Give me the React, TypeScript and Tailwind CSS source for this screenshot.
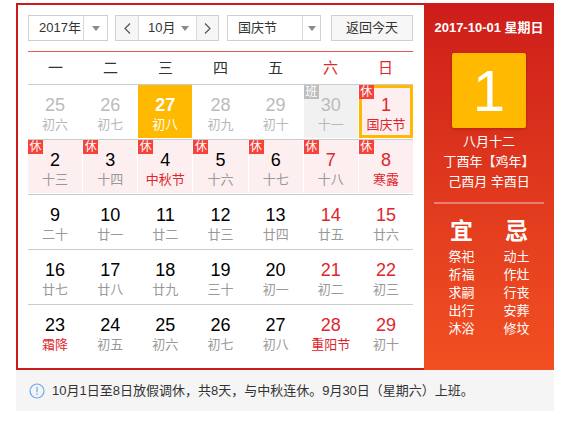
type Day = {
  n: number;
  lunar: string;
  other?: boolean;
  red?: boolean;
  lunarRed?: boolean;
  badge?: "休" | "班";
  pink?: boolean;
  gray?: boolean;
  selected?: boolean;
  today?: boolean;
};

const weeks: Day[][] = [
  [
    { n: 25, lunar: "初六", other: true },
    { n: 26, lunar: "初七", other: true },
    { n: 27, lunar: "初八", other: true, selected: true },
    { n: 28, lunar: "初九", other: true },
    { n: 29, lunar: "初十", other: true },
    { n: 30, lunar: "十一", other: true, badge: "班", gray: true },
    { n: 1, lunar: "国庆节", red: true, lunarRed: true, badge: "休", pink: true, today: true },
  ],
  [
    { n: 2, lunar: "十三", badge: "休", pink: true },
    { n: 3, lunar: "十四", badge: "休", pink: true },
    { n: 4, lunar: "中秋节", lunarRed: true, badge: "休", pink: true },
    { n: 5, lunar: "十六", badge: "休", pink: true },
    { n: 6, lunar: "十七", badge: "休", pink: true },
    { n: 7, lunar: "十八", red: true, badge: "休", pink: true },
    { n: 8, lunar: "寒露", red: true, lunarRed: true, badge: "休", pink: true },
  ],
  [
    { n: 9, lunar: "二十" },
    { n: 10, lunar: "廿一" },
    { n: 11, lunar: "廿二" },
    { n: 12, lunar: "廿三" },
    { n: 13, lunar: "廿四" },
    { n: 14, lunar: "廿五", red: true },
    { n: 15, lunar: "廿六", red: true },
  ],
  [
    { n: 16, lunar: "廿七" },
    { n: 17, lunar: "廿八" },
    { n: 18, lunar: "廿九" },
    { n: 19, lunar: "三十" },
    { n: 20, lunar: "初一" },
    { n: 21, lunar: "初二", red: true },
    { n: 22, lunar: "初三", red: true },
  ],
  [
    { n: 23, lunar: "霜降", lunarRed: true },
    { n: 24, lunar: "初五" },
    { n: 25, lunar: "初六" },
    { n: 26, lunar: "初七" },
    { n: 27, lunar: "初八" },
    { n: 28, lunar: "重阳节", red: true, lunarRed: true },
    { n: 29, lunar: "初十", red: true },
  ],
];

const yi = ["祭祀", "祈福", "求嗣", "出行", "沐浴"];
const ji = ["动土", "作灶", "行丧", "安葬", "修坟"];

function Caret() {
  return (
    <svg width="8" height="5" viewBox="0 0 8 5" className="shrink-0">
      <path d="M0 0h8L4 5z" fill="#8a8a8a" />
    </svg>
  );
}

function Chevron({ dir }: { dir: "l" | "r" }) {
  return (
    <svg width="7" height="11" viewBox="0 0 7 11">
      <path
        d={dir === "l" ? "M6 0.5L1 5.5l5 5" : "M1 0.5l5 5-5 5"}
        fill="none"
        stroke="#555"
        strokeWidth="1.2"
      />
    </svg>
  );
}

function Cell({ d }: { d: Day }) {
  const bg = d.selected
    ? "bg-[#ffb900]"
    : d.pink
      ? "bg-[#fdefef]"
      : d.gray
        ? "bg-[#f1f1f1]"
        : "bg-white";
  const numColor = d.selected
    ? "text-white font-bold"
    : d.other
      ? "text-[#bbbbbb]"
      : d.red
        ? "text-[#e0262c]"
        : "text-black";
  const lunarColor = d.selected
    ? "text-white"
    : d.other
      ? "text-[#b8b8b8]"
      : d.lunarRed
        ? "text-[#e0262c]"
        : "text-[#999999]";
  return (
    <div className={`relative h-[53px] ${bg} flex flex-col items-center pt-[9px]`}>
      {d.today && <div className="absolute inset-0 border-[3px] border-[#ffb900]" />}
      {d.badge && (
        <div
          className={`absolute left-0 top-0 z-10 flex h-[14px] w-[15px] items-center justify-center text-[12px] leading-none text-white ${
            d.badge === "休" ? "bg-[#f5423a]" : "bg-[#bdbdbd]"
          }`}
        >
          {d.badge}
        </div>
      )}
      <div className={`relative text-[18px] leading-[22px] ${numColor}`}>{d.n}</div>
      <div className={`relative text-[13px] leading-[18px] ${lunarColor}`}>{d.lunar}</div>
    </div>
  );
}

export default function App() {
  return (
    <div className="ml-[16px] mt-[3px] w-[538px] font-['Liberation_Sans','Noto_Sans_CJK_SC',sans-serif]">
      <div className="flex">
        {/* calendar */}
        <div className="w-[408px] border-2 border-r-0 border-[#cc1b1b] pl-[10px] pr-[11px] pt-[10px] pb-[9px]">
          <div className="flex h-[26px] text-[13px] text-[#333]">
            <div className="flex w-[80px] border border-[#cfcfcf]">
              <div className="flex flex-1 items-center pl-[10px]">2017年</div>
              <div className="flex w-[24px] items-center justify-center border-l border-[#d9d9d9]">
                <Caret />
              </div>
            </div>
            <div className="ml-[7px] flex w-[104px] border border-[#cfcfcf]">
              <div className="flex w-[22px] items-center justify-center bg-[#f6f6f6]">
                <Chevron dir="l" />
              </div>
              <div className="flex flex-1 items-center justify-between border-x border-[#d9d9d9] pl-[9px] pr-[7px]">
                <span>10月</span>
                <Caret />
              </div>
              <div className="flex w-[21px] items-center justify-center bg-[#f6f6f6]">
                <Chevron dir="r" />
              </div>
            </div>
            <div className="ml-[8px] flex w-[94px] border border-[#cfcfcf]">
              <div className="flex flex-1 items-center pl-[10px]">国庆节</div>
              <div className="flex w-[18px] items-center justify-center border-l border-[#d9d9d9]">
                <Caret />
              </div>
            </div>
            <div className="ml-[10px] flex w-[82px] items-center justify-center border border-[#cfcfcf] bg-[#f7f7f7]">
              返回今天
            </div>
          </div>

          <div className="mt-[10px] h-px bg-[#e45a4c]" />

          <div className="grid h-[33px] grid-cols-7 items-center border-b border-[#cccccc] text-center text-[15px] text-[#333]">
            {["一", "二", "三", "四", "五", "六", "日"].map((w, i) => (
              <div key={w} className={i > 4 ? "text-[#e0262c]" : ""}>
                {w}
              </div>
            ))}
          </div>

          {weeks.map((row, i) => (
            <div
              key={i}
              className={`grid grid-cols-7 gap-x-px pb-px ${i < weeks.length - 1 ? "border-b border-[#cccccc]" : ""}`}
            >
              {row.map((d, j) => (
                <Cell key={j} d={d} />
              ))}
            </div>
          ))}
        </div>

        {/* side panel */}
        <div className="flex w-[130px] flex-col items-center bg-linear-to-b from-[#cd1c1a] to-[#f24f22] text-white">
          <div className="mt-[16px] text-[13px] font-bold leading-[18px]">2017-10-01 星期日</div>
          <div className="mt-[16px] flex h-[75px] w-[74px] items-center justify-center rounded-[2px] bg-[#ffb900] text-[58px] leading-none shadow-[0_1px_3px_rgba(120,0,0,0.35)]">
            1
          </div>
          <div className="mt-[4px] text-center text-[13px] leading-[20px]">
            <div>八月十二</div>
            <div>丁酉年【鸡年】</div>
            <div>己酉月 辛酉日</div>
          </div>
          <div className="mt-[10px] h-[2px] w-[110px] bg-white/35" />
          <div className="mt-[12px] grid w-[110px] grid-cols-2 text-center">
            <div className="text-[23px] font-bold leading-[30px]">宜</div>
            <div className="text-[23px] font-bold leading-[30px]">忌</div>
            <div className="mt-[2px] text-[13px] leading-[18px]">
              {yi.map((t) => (
                <div key={t}>{t}</div>
              ))}
            </div>
            <div className="mt-[2px] text-[13px] leading-[18px]">
              {ji.map((t) => (
                <div key={t}>{t}</div>
              ))}
            </div>
          </div>
        </div>
      </div>

      {/* notice */}
      <div className="flex h-[41px] items-center bg-[#f5f5f5] pl-[13px] text-[13px] text-[#333]">
        <svg width="16" height="16" viewBox="0 0 16 16" className="shrink-0">
          <circle cx="8" cy="8" r="7" fill="none" stroke="#6aa8f0" strokeWidth="1.2" />
          <rect x="7.4" y="3.8" width="1.2" height="5.6" fill="#6aa8f0" />
          <rect x="7.4" y="10.6" width="1.2" height="1.4" fill="#6aa8f0" />
        </svg>
        <span className="ml-[7px]">10月1日至8日放假调休，共8天，与中秋连休。9月30日（星期六）上班。</span>
      </div>
    </div>
  );
}
